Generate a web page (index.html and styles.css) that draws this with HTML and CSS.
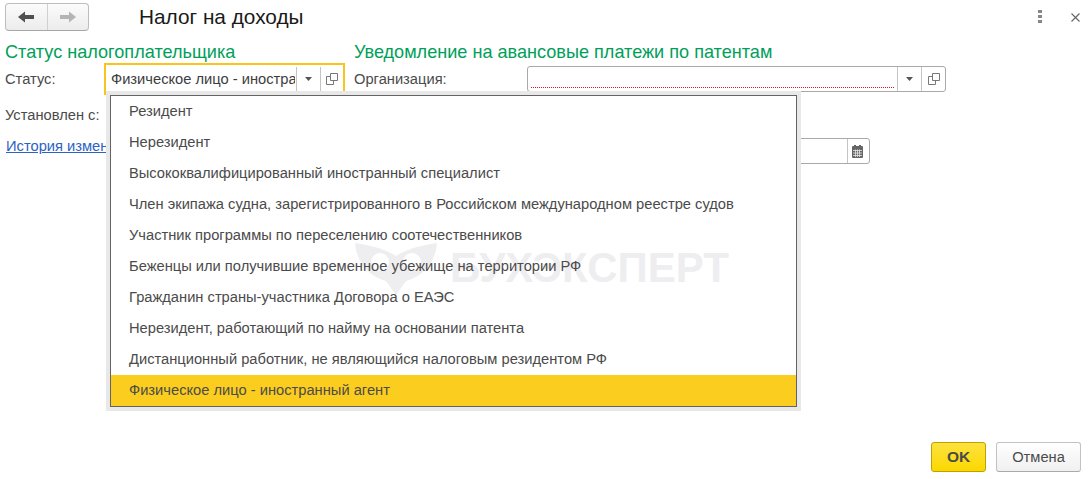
FILE: index.html
```html
<!DOCTYPE html>
<html lang="ru">
<head>
<meta charset="utf-8">
<title>Налог на доходы</title>
<link rel="stylesheet" href="styles.css">
</head>
<body>
<div class="window">
  <header class="topbar">
    <div class="nav">
      <button class="nav-btn">
        <svg width="18" height="14" viewBox="0 0 18 14"><path d="M1 7 8 1.500V5H17V9H8V12.500Z" fill="#4f4f4f"/></svg>
      </button>
      <button class="nav-btn">
        <svg width="18" height="14" viewBox="0 0 18 14"><path d="M17 7 10 1.500V5H1V9H10V12.500Z" fill="#b4b4b4"/></svg>
      </button>
    </div>
    <h1 class="title">Налог на доходы</h1>
    <div class="win-actions">
      <svg width="6" height="14" viewBox="0 0 6 14"><rect x="1" y="0" width="4" height="3" fill="#888"/><rect x="1" y="5" width="4" height="3" fill="#888"/><rect x="1" y="10" width="4" height="3" fill="#888"/></svg>
      <svg width="9" height="9" viewBox="0 0 9 9"><path d="M.5.500 8.500 8.500M8.500.500 .5 8.500" stroke="#666" stroke-width="1.100" fill="none"/></svg>
    </div>
  </header>

  <main class="columns">
    <section class="col-left">
      <h2 class="section">Статус налогоплательщика</h2>
      <div class="row row-status">
        <span class="label label-left">Статус:</span>
        <div class="field field-focus">
          <span class="field-text">Физическое лицо - иностранный агент</span>
          <span class="field-btn"><svg width="7" height="4" viewBox="0 0 7 4"><path d="M0 0H7L3.500 4Z" fill="#555"/></svg></span>
          <span class="field-btn"><svg width="12" height="12" viewBox="0 0 12 12"><path d="M4.500.500H11.500V7.500H4.500ZM4.500 3.500H.5V11.500H7.500V7.500" fill="none" stroke="#777"/></svg></span>
        </div>
      </div>
      <div class="row row-since"><span class="label">Установлен с:</span></div>
      <a class="history" href="#">История изменений</a>
    </section>
    <section class="col-right">
      <h2 class="section">Уведомление на авансовые платежи по патентам</h2>
      <div class="row row-org">
        <span class="label label-org">Организация:</span>
        <div class="field field-org">
          <span class="field-text"><span class="required"></span></span>
          <span class="field-btn"><svg width="7" height="4" viewBox="0 0 7 4"><path d="M0 0H7L3.500 4Z" fill="#555"/></svg></span>
          <span class="field-btn"><svg width="12" height="12" viewBox="0 0 12 12"><path d="M4.500.500H11.500V7.500H4.500ZM4.500 3.500H.5V11.500H7.500V7.500" fill="none" stroke="#777"/></svg></span>
        </div>
      </div>
      <div class="row row-date">
        <div class="field field-date">
          <span class="field-text"></span>
          <span class="field-btn"><svg width="11" height="13" viewBox="0 0 11 13"><rect x="0" y="1" width="11" height="12" rx="1" fill="#666"/><rect x="2" y="0" width="2" height="2" fill="#666"/><rect x="7" y="0" width="2" height="2" fill="#666"/><path d="M1 5.500H10M1 8H10M1 10.500H10M3.500 4.500V12M5.500 4.500V12M7.500 4.500V12" stroke="#e4e4e4" stroke-width=".8"/></svg></span>
        </div>
      </div>
    </section>
  </main>

  <footer class="actions">
    <button class="btn btn-ok">OK</button>
    <button class="btn btn-cancel">Отмена</button>
  </footer>

  <div class="popup">
    <ul class="list">
      <li>Резидент</li>
      <li>Нерезидент</li>
      <li>Высококвалифицированный иностранный специалист</li>
      <li>Член экипажа судна, зарегистрированного в Российском международном реестре судов</li>
      <li>Участник программы по переселению соотечественников</li>
      <li>Беженцы или получившие временное убежище на территории РФ</li>
      <li>Гражданин страны-участника Договора о ЕАЭС</li>
      <li>Нерезидент, работающий по найму на основании патента</li>
      <li>Дистанционный работник, не являющийся налоговым резидентом РФ</li>
      <li class="selected">Физическое лицо - иностранный агент</li>
    </ul>
    <div class="watermark" aria-hidden="true">
      <svg width="84" height="56" viewBox="0 0 84 56"><path d="M1 3C14 5 30 8 42 16 54 8 70 5 83 3 81 27 64 38 52 41L42 55 32 41C20 38 3 27 1 3Z" fill="#eeeef0"/><circle cx="26" cy="22" r="9" fill="#fff"/><circle cx="58" cy="22" r="9" fill="#fff"/></svg>
      <span class="watermark-text">БУХЭКСПЕРТ</span>
    </div>
  </div>
</div>
</body>
</html>
```
FILE: styles.css
```css
* { box-sizing: border-box; }
html, body { margin: 0; height: 100%; }
body {
  background: #fff;
  font-family: "Liberation Sans", Arial, sans-serif;
  font-size: 14.700px;
  color: #4b4b4b;
  overflow: hidden;
}
.window { position: relative; width: 1088px; height: 479px; padding: 3px 5px 0; display: flex; flex-direction: column; }
.topbar { display: flex; align-items: center; height: 28px; }
.nav {
  display: flex; width: 84px; height: 28px;
  border: 1px solid #bdbdbd; border-bottom-color: #a8a8a8; border-radius: 4px;
  background: linear-gradient(#fbfbfb, #ececec);
}
.nav-btn { flex: 1; border: 0; padding: 0; background: none; display: flex; align-items: center; justify-content: center; }
.nav-btn + .nav-btn { border-left: 1px solid #d0d0d0; }
.title { margin: 0 0 0 50px; font-size: 20.800px; line-height: 28px; font-weight: 400; color: #1a1a1a; }
.win-actions { margin-left: auto; margin-right: 3px; display: flex; align-items: center; gap: 28px; }

.columns { display: flex; margin-top: 11px; }
.col-left { width: 349px; flex: none; }
.col-right { flex: none; width: 592px; }
.section { margin: 0; font-size: 18.100px; line-height: 21px; font-weight: 400; color: #00a05a; }
.row { display: flex; align-items: center; }
.label { color: #4b4b4b; }
.label-left { width: 99px; flex: none; }
.label-org { width: 173px; flex: none; }

.row-status { height: 32px; }
.row-org { height: 26px; margin-top: 3px; }
.row-since { margin-top: 10px; height: 20px; }
.history { display: inline-block; margin: 12px 0 0 1px; color: #2c62c5; line-height: 18px; width: 100px; white-space: nowrap; overflow: hidden; }
.row-date { margin-top: 46px; justify-content: flex-end; width: 516px; }

.field { display: flex; align-items: center; border: 1px solid #a9a9a9; border-radius: 3px; background: #fff; height: 26px; }
.field-focus { width: 241px; height: 32px; border: 2px solid #f9c41e; border-radius: 0; }
.field-org { width: 419px; }
.field-date { width: 200px; }
.field-text { flex: 1; min-width: 0; padding-left: 5px; white-space: nowrap; overflow: hidden; color: #3d3d3d; position: relative; align-self: stretch; line-height: 28px; }
.field-btn { flex: none; width: 24px; height: 100%; display: flex; align-items: center; justify-content: center; border-left: 1px solid #c4c4c4; }
.field-focus .field-btn { height: 24px; }
.field-focus .field-text { margin-right: 1px; }
.field-focus .field-btn + .field-btn { width: 23px; padding-right: 1px; }
.field-date .field-btn { width: 22px; padding-right: 2px; }
.required { position: absolute; left: 3px; right: 3px; bottom: 3px; border-bottom: 1px dotted #e0101c; }

.actions { position: absolute; right: 7px; top: 442px; display: flex; gap: 10px; }
.btn { height: 30px; border-radius: 3px; font-family: inherit; font-size: 14.700px; padding: 0; }
.btn-ok { width: 55px; background: linear-gradient(#fde23f, #fbd800); border: 1px solid #bda100; color: #4a4a4a; font-weight: 700; font-size: 15.500px; }
.btn-cancel { width: 85px; background: linear-gradient(#fff, #f0f0f0); border: 1px solid #c2c2c2; border-bottom-color: #aaa; color: #4b4b4b; }

.popup {
  position: absolute; left: 110px; top: 95px; width: 687px; height: 312px;
  background: #fff; border: 1px solid #636363;
  box-shadow: 0 0 0 4px #e8e8e8;
}
.list { list-style: none; margin: 0; padding: 0; position: relative; z-index: 1; }
.list li { height: 31px; line-height: 30px; padding-left: 18px; white-space: nowrap; color: #4b4b4b; }
.list li.selected { background: #fbcd1e; }
.watermark { position: absolute; left: 243px; top: 144px; display: flex; align-items: center; gap: 12px; }
.watermark-text { font-size: 42px; font-weight: 700; color: #eeeef0; line-height: 46px; }
```
